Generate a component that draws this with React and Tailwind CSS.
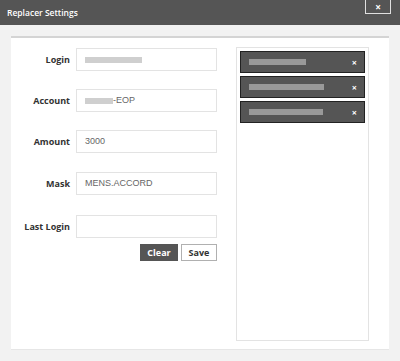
import React from "react";

const fields = [
  { label: "Login", value: null, bar: "w-[57px]", suffix: "", gap: "mb-[18px]" },
  { label: "Account", value: null, bar: "w-[28px]", suffix: "-EOP", gap: "mb-[18px]" },
  { label: "Amount", value: "3000", gap: "mb-[19px]" },
  { label: "Mask", value: "MENS.ACCORD", gap: "mb-[20px]" },
  { label: "Last Login", value: "", gap: "mb-[6px]" },
];

const items = ["w-[57px]", "w-[75px]", "w-[74px]"];

export default function App() {
  return (
    <div className="w-[400px] h-[361px] bg-[#f2f2f2] font-['Open_Sans',sans-serif] overflow-hidden">
      {/* Header */}
      <div className="h-[25px] bg-[#555555] flex items-start justify-between pl-[7px] pr-[9px]">
        <span className="text-white text-[8.5px] font-semibold leading-none mt-[9px]">Replacer Settings</span>
        <button className="w-[26px] h-[14px] border-x border-b border-[#e0e0e0] flex items-center justify-center text-white text-[10px] font-bold leading-none">
          ×
        </button>
      </div>

      {/* Body */}
      <div className="pt-[11px] px-[11px]">
        <div className="h-[314px] bg-white border-t-2 border-[#d4d4d4] border-b border-b-[#e6e6e6] flex">
          {/* Form */}
          <div className="w-[206px] pt-[10px]">
            {fields.map((f) => (
              <div key={f.label} className={`flex items-center h-[23px] ${f.gap}`}>
                <label className="w-[65px] shrink-0 text-right text-[9px] font-bold text-[#333] pr-[6px]">{f.label}</label>
                <div className="w-[141px] h-[23px] border border-[#e3e3e3] flex items-center pl-[8px] font-['Liberation_Sans',sans-serif] text-[9px] text-[#666]">
                  {f.value === null ? (
                    <>
                      <span className={`${f.bar} h-[6px] bg-[#cfcfcf]`} />
                      {f.suffix && <span>{f.suffix}</span>}
                    </>
                  ) : (
                    f.value
                  )}
                </div>
              </div>
            ))}
            <div className="flex justify-end gap-[3px]">
              <button className="w-[38px] h-[17px] bg-[#555555] text-white text-[9px] font-bold leading-none">Clear</button>
              <button className="w-[36px] h-[17px] border border-[#b0b0b0] text-[#333] text-[9px] font-bold leading-none">Save</button>
            </div>
          </div>

          {/* Right list */}
          <div className="ml-[19px] mt-[9px] w-[133px] h-[294px] border border-[#e3e3e3] px-[3px] pt-[3px] flex flex-col gap-[3px]">
            {items.map((w, i) => (
              <div key={i} className="h-[22px] bg-[#555555] border border-[#222] flex items-center justify-between pl-[8px] pr-[7px]">
                <span className={`${w} h-[6px] bg-[#999999]`} />
                <span className="text-white text-[9px] font-bold leading-none">×</span>
              </div>
            ))}
          </div>
        </div>
      </div>
    </div>
  );
}
